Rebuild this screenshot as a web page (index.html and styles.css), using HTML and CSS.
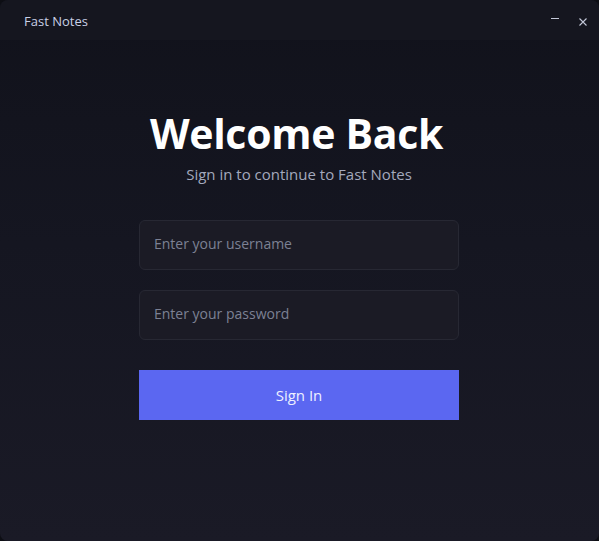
FILE: index.html
```html
<!DOCTYPE html>
<html>
<head>
<meta charset="utf-8">
<link rel="stylesheet" href="styles.css">
</head>
<body>
<div class="window">
  <div class="titlebar">
    <span class="app-name">Fast Notes</span>
    <div class="controls">
      <span class="ctl min"><svg width="10" height="10" viewBox="0 0 10 10"><path d="M1 5.5h8" stroke="#c3c8d8" stroke-width="1"/></svg></span>
      <span class="ctl close"><svg width="10" height="10" viewBox="0 0 10 10"><path d="M1.5 1.5l7 7M8.5 1.5l-7 7" stroke="#c3c8d8" stroke-width="1.1"/></svg></span>
    </div>
  </div>
  <main class="content">
    <h1 class="title">Welcome Back</h1>
    <p class="subtitle">Sign in to continue to Fast Notes</p>
    <form class="form">
      <input class="field" type="text" placeholder="Enter your username">
      <input class="field" type="password" placeholder="Enter your password">
      <button class="btn" type="button">Sign In</button>
    </form>
  </main>
</div>
</body>
</html>
```

FILE: styles.css
```css
* { box-sizing: border-box; }
html, body { margin: 0; padding: 0; background: #0d0e14; }
body { font-family: "Open Sans", "Noto Sans", sans-serif; }
.window {
  width: 599px;
  height: 541px;
  border-radius: 8px;
  overflow: hidden;
  display: flex;
  flex-direction: column;
  background: linear-gradient(180deg, #11121b 0%, #151621 45%, #1a1a26 100%);
}
.titlebar {
  height: 40px;
  flex: none;
  background: #15161f;
  display: flex;
  align-items: center;
  justify-content: space-between;
  padding: 0 10px 0 24px;
}
.app-name {
  color: #c9d0e6;
  font-size: 13px;
  position: relative;
  top: 1px;
}
.controls { display: flex; gap: 16px; align-items: center; }
.ctl { display: flex; width: 12px; height: 12px; align-items: center; justify-content: center; }
.ctl.min { position: relative; top: -2px; }
.ctl.close { position: relative; top: 2px; }
.content {
  flex: 1;
  display: flex;
  flex-direction: column;
  align-items: center;
  padding-top: 65px;
  padding-right: 1px;
}
.title {
  margin: 0 5px 0 0;
  color: #ffffff;
  font-size: 41px;
  font-weight: 700;
  line-height: 56px;
  letter-spacing: -0.3px;
}
.subtitle {
  margin: 3px 0 0;
  color: #a3a9bd;
  font-size: 15px;
  line-height: 20px;
}
.form {
  margin-top: 36px;
  width: 320px;
  display: flex;
  flex-direction: column;
}
.field {
  height: 50px;
  width: 100%;
  border: 1px solid #272833;
  border-radius: 6px;
  background: #1b1b25;
  color: #e0e3ee;
  font-family: inherit;
  font-size: 14px;
  padding: 0 14px 4px;
  margin-bottom: 20px;
  outline: none;
}
.field::placeholder { color: #7c8194; }
.btn {
  margin-top: 10px;
  height: 50px;
  width: 100%;
  border: none;
  border-radius: 0;
  background: #5b67f1;
  color: #eef0ff;
  font-family: inherit;
  font-size: 15px;
}
```
